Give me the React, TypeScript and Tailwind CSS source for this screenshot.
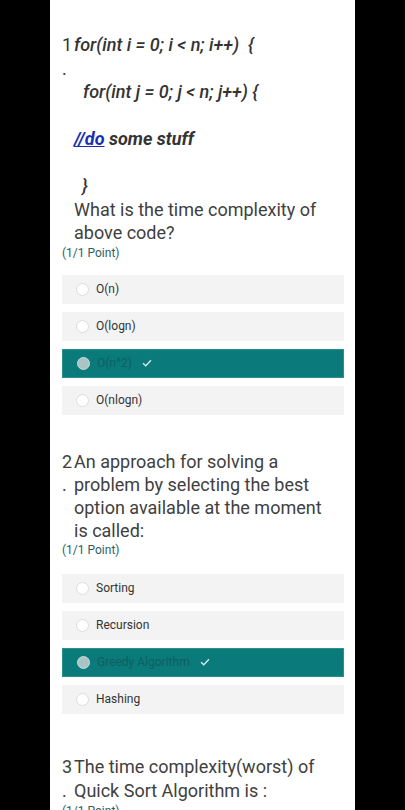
import React from "react";

type Opt = { label: string; selected?: boolean };

const Check = () => (
  <svg width="10" height="8" viewBox="0 0 10 8" className="ml-[10px]">
    <path d="M1 4.2 L3.8 6.8 L9 1.2" fill="none" stroke="#d8eeee" strokeWidth="1.3" />
  </svg>
);

function Option({ label, selected }: Opt) {
  if (selected) {
    return (
      <div className="flex items-center h-[29px] pl-[14px] bg-[#0a7a7b] border border-[#2a9090]">
        <span className="w-[13px] h-[13px] rounded-full bg-[#a9c4c4] border border-[#c8dcdc]" />
        <span className="ml-[7px] text-[12px] text-[#0f5f60]">{label}</span>
        <Check />
      </div>
    );
  }
  return (
    <div className="flex items-center h-[29px] pl-[14px] bg-[#f3f3f3]">
      <span className="w-[13px] h-[13px] rounded-full bg-white border border-[#dcdcdc]" />
      <span className="ml-[7px] text-[12px] text-[#333333]">{label}</span>
    </div>
  );
}

function Options({ items }: { items: Opt[] }) {
  return (
    <div className="flex flex-col gap-[8px]">
      {items.map((o, i) => (
        <Option key={i} {...o} />
      ))}
    </div>
  );
}

function Point() {
  return <div className="text-[12px] leading-[16px] text-[#2d5e66]">(1/1 Point)</div>;
}

export default function App() {
  return (
    <div className="w-[405px] h-[810px] overflow-hidden bg-black" style={{ fontFamily: "Roboto, 'Liberation Sans', sans-serif" }}>
      <div className="mx-auto w-[305px] h-full bg-white pl-[12px] pr-[11px]">
        {/* Question 1 */}
        <div className="pt-[33px] flex text-[18px] leading-[23.5px]">
          <div className="w-[12px] text-[#333]">
            <div>1</div>
            <div>.</div>
          </div>
          <div className="flex-1 text-[#333]">
            <div className="italic font-medium whitespace-pre">for(int i = 0; i &lt; n; i++)  {"{"}</div>
            <div>&nbsp;</div>
            <div className="italic font-medium pl-[9px]">for(int j = 0; j &lt; n; j++) {"{"}</div>
            <div>&nbsp;</div>
            <div className="font-bold italic">
              <span className="text-[#1a2fb0] underline">//do</span> some stuff
            </div>
            <div>&nbsp;</div>
            <div className="italic font-medium pl-[8px]">{"}"}</div>
            <div className="text-[#404040]">What is the time complexity of above code?</div>
          </div>
        </div>
        <Point />
        <div className="mt-[14px]">
          <Options
            items={[
              { label: "O(n)" },
              { label: "O(logn)" },
              { label: "O(n^2)", selected: true },
              { label: "O(nlogn)" },
            ]}
          />
        </div>

        {/* Question 2 */}
        <div className="mt-[35px] flex text-[18px] leading-[23px] text-[#404040]">
          <div className="w-[12px]">
            <div>2</div>
            <div>.</div>
          </div>
          <div className="flex-1 pr-[8px]">An approach for solving a problem by selecting the best option available at the moment is called:</div>
        </div>
        <Point />
        <div className="mt-[16px]">
          <Options
            items={[
              { label: "Sorting" },
              { label: "Recursion" },
              { label: "Greedy Algorithm", selected: true },
              { label: "Hashing" },
            ]}
          />
        </div>

        {/* Question 3 */}
        <div className="mt-[41px] flex text-[18px] leading-[24px] text-[#404040]">
          <div className="w-[12px]">
            <div>3</div>
            <div>.</div>
          </div>
          <div className="flex-1">The time complexity(worst) of Quick Sort Algorithm is :</div>
        </div>
        <Point />
      </div>
    </div>
  );
}
